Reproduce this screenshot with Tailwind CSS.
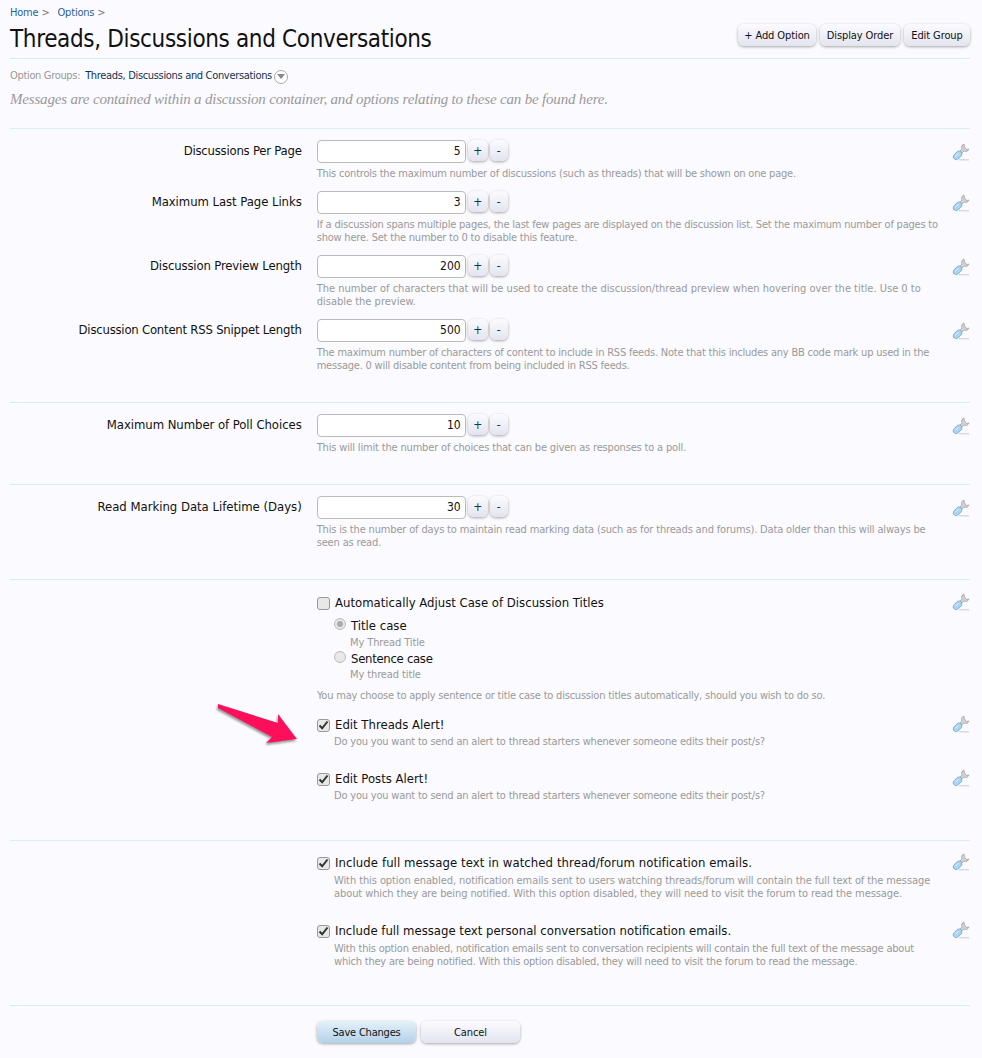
<!DOCTYPE html>
<html lang="en">
<head>
<meta charset="UTF-8" />
<title>Threads, Discussions and Conversations</title>
<script src="https://cdn.jsdelivr.net/npm/@tailwindcss/browser@4"></script>
</head>
<body class="relative h-[1058px] overflow-hidden bg-[#fbfbff] font-['DejaVu_Sans_Condensed','DejaVu_Sans',sans-serif] text-[#111]">

<!-- Header -->
<div class="ml-[10px] mr-[12px]">
  <div class="flex h-[24px] items-center pt-[3px] text-[11px] tracking-[-0.2px] text-[#777]">
    <a class="text-[#2b5f96]">Home</a><span class="ml-[3px] mr-[8px]">&gt;</span>
    <a class="text-[#2b5f96]">Options</a><span class="ml-[3px]">&gt;</span>
  </div>
  <div class="flex h-[35px] items-start justify-between border-b border-[#d7edfc]">
    <h1 class="text-[24px] leading-[31px] tracking-[-0.35px]">Threads, Discussions and Conversations</h1>
    <div class="flex gap-[4px]">
      <a class="flex h-[22px] w-[78px] items-center justify-center rounded-[6px] bg-gradient-to-b from-[#fbfbff] to-[#e4e4ef] pt-[2px] text-[11px] tracking-[-0.1px] shadow-[0_1px_3px_rgba(0,0,0,0.35)]">+ Add Option</a>
      <a class="flex h-[22px] w-[80px] items-center justify-center rounded-[6px] bg-gradient-to-b from-[#fbfbff] to-[#e4e4ef] pt-[2px] text-[11px] tracking-[-0.1px] shadow-[0_1px_3px_rgba(0,0,0,0.35)]">Display Order</a>
      <a class="flex h-[22px] w-[66px] items-center justify-center rounded-[6px] bg-gradient-to-b from-[#fbfbff] to-[#e4e4ef] pt-[2px] text-[11px] tracking-[-0.1px] shadow-[0_1px_3px_rgba(0,0,0,0.35)]">Edit Group</a>
    </div>
  </div>
  <div class="flex h-[33px] items-center pt-[2px] text-[11px] tracking-[-0.33px] text-[#999]">
    Option Groups:<span class="ml-[5px] text-[#12324f]">Threads, Discussions and Conversations</span>
    <span class="ml-[2px] flex h-[14px] w-[14px] items-center justify-center rounded-full border border-[#aaa] bg-white">
      <svg width="8" height="5" viewBox="0 0 8 5"><path d="M0 0h8L4 5z" fill="#888"/></svg>
    </span>
  </div>
  <p class="-mt-[1px] font-['Liberation_Serif',serif] text-[15px] leading-[16px] tracking-[-0.18px] italic text-[#999]">Messages are contained within a discussion container, and options relating to these can be found here.</p>
</div>

<!-- Number options -->
<div class="ml-[10px] mr-[12px] mt-[21px] border-t border-[#d7edfc] pt-[11px] pb-[30px]">
  <div class="flex h-[51px] items-start">
    <label class="w-[292px] pt-[2px] text-right text-[13px] leading-[18px] tracking-[-0.23px]">Discussions Per Page</label>
    <div class="ml-[15px] w-[625px]">
      <div class="flex h-[23px] items-start">
        <input value="5" readonly class="h-[23px] w-[149px] rounded-[4px] border border-[#bbb] bg-white px-[4px] pb-[1px] text-right text-[12px]" />
        <button class="ml-[2px] h-[21px] w-[20px] rounded-[6px] bg-gradient-to-b from-[#fbfbff] to-[#e4e4ef] text-[12px] text-[#12324f] shadow-[0_1px_3px_rgba(0,0,0,0.35)]">+</button>
        <button class="ml-[2px] h-[21px] w-[18px] rounded-[6px] bg-gradient-to-b from-[#fbfbff] to-[#e4e4ef] text-[12px] text-[#12324f] shadow-[0_1px_3px_rgba(0,0,0,0.35)]">-</button>
      </div>
      <p class="mt-[4px] text-[11px] leading-[13px] tracking-[-0.21px] text-[#999]">This controls the maximum number of discussions (such as threads) that will be shown on one page.</p>
    </div>
    <svg class="ml-[11px] mt-[3px]" width="18" height="20" viewBox="0 0 18 20"><use href="#wrench"/></svg>
  </div>
  <div class="flex h-[64px] items-start">
    <label class="w-[292px] pt-[2px] text-right text-[13px] leading-[18px] tracking-[-0.06px]">Maximum Last Page Links</label>
    <div class="ml-[15px] w-[625px]">
      <div class="flex h-[23px] items-start">
        <input value="3" readonly class="h-[23px] w-[149px] rounded-[4px] border border-[#bbb] bg-white px-[4px] pb-[1px] text-right text-[12px]" />
        <button class="ml-[2px] h-[21px] w-[20px] rounded-[6px] bg-gradient-to-b from-[#fbfbff] to-[#e4e4ef] text-[12px] text-[#12324f] shadow-[0_1px_3px_rgba(0,0,0,0.35)]">+</button>
        <button class="ml-[2px] h-[21px] w-[18px] rounded-[6px] bg-gradient-to-b from-[#fbfbff] to-[#e4e4ef] text-[12px] text-[#12324f] shadow-[0_1px_3px_rgba(0,0,0,0.35)]">-</button>
      </div>
      <p class="mt-[4px] text-[11px] leading-[13px] tracking-[-0.21px] text-[#999]">If a discussion spans multiple pages, the last few pages are displayed on the discussion list. Set the maximum number of pages to show here. Set the number to 0 to disable this feature.</p>
    </div>
    <svg class="ml-[11px] mt-[3px]" width="18" height="20" viewBox="0 0 18 20"><use href="#wrench"/></svg>
  </div>
  <div class="flex h-[64px] items-start">
    <label class="w-[292px] pt-[2px] text-right text-[13px] leading-[18px] tracking-[-0.15px]">Discussion Preview Length</label>
    <div class="ml-[15px] w-[625px]">
      <div class="flex h-[23px] items-start">
        <input value="200" readonly class="h-[23px] w-[149px] rounded-[4px] border border-[#bbb] bg-white px-[4px] pb-[1px] text-right text-[12px]" />
        <button class="ml-[2px] h-[21px] w-[20px] rounded-[6px] bg-gradient-to-b from-[#fbfbff] to-[#e4e4ef] text-[12px] text-[#12324f] shadow-[0_1px_3px_rgba(0,0,0,0.35)]">+</button>
        <button class="ml-[2px] h-[21px] w-[18px] rounded-[6px] bg-gradient-to-b from-[#fbfbff] to-[#e4e4ef] text-[12px] text-[#12324f] shadow-[0_1px_3px_rgba(0,0,0,0.35)]">-</button>
      </div>
      <p class="mt-[4px] text-[11px] leading-[13px] tracking-[0px] text-[#999]">The number of characters that will be used to create the discussion/thread preview when hovering over the title. Use 0 to disable the preview.</p>
    </div>
    <svg class="ml-[11px] mt-[3px]" width="18" height="20" viewBox="0 0 18 20"><use href="#wrench"/></svg>
  </div>
  <div class="flex h-[53px] items-start">
    <label class="w-[292px] pt-[2px] text-right text-[13px] leading-[18px] tracking-[-0.23px]">Discussion Content RSS Snippet Length</label>
    <div class="ml-[15px] w-[625px]">
      <div class="flex h-[23px] items-start">
        <input value="500" readonly class="h-[23px] w-[149px] rounded-[4px] border border-[#bbb] bg-white px-[4px] pb-[1px] text-right text-[12px]" />
        <button class="ml-[2px] h-[21px] w-[20px] rounded-[6px] bg-gradient-to-b from-[#fbfbff] to-[#e4e4ef] text-[12px] text-[#12324f] shadow-[0_1px_3px_rgba(0,0,0,0.35)]">+</button>
        <button class="ml-[2px] h-[21px] w-[18px] rounded-[6px] bg-gradient-to-b from-[#fbfbff] to-[#e4e4ef] text-[12px] text-[#12324f] shadow-[0_1px_3px_rgba(0,0,0,0.35)]">-</button>
      </div>
      <p class="mt-[4px] text-[11px] leading-[13px] tracking-[-0.21px] text-[#999]">The maximum number of characters of content to include in RSS feeds. Note that this includes any BB code mark up used in the message. 0 will disable content from being included in RSS feeds.</p>
    </div>
    <svg class="ml-[11px] mt-[3px]" width="18" height="20" viewBox="0 0 18 20"><use href="#wrench"/></svg>
  </div>
</div>

<div class="ml-[10px] mr-[12px] border-t border-[#d7edfc] pt-[11px] pb-[30px]">
  <div class="flex h-[40px] items-start">
    <label class="w-[292px] pt-[2px] text-right text-[13px] leading-[18px] tracking-[-0.06px]">Maximum Number of Poll Choices</label>
    <div class="ml-[15px] w-[625px]">
      <div class="flex h-[23px] items-start">
        <input value="10" readonly class="h-[23px] w-[149px] rounded-[4px] border border-[#bbb] bg-white px-[4px] pb-[1px] text-right text-[12px]" />
        <button class="ml-[2px] h-[21px] w-[20px] rounded-[6px] bg-gradient-to-b from-[#fbfbff] to-[#e4e4ef] text-[12px] text-[#12324f] shadow-[0_1px_3px_rgba(0,0,0,0.35)]">+</button>
        <button class="ml-[2px] h-[21px] w-[18px] rounded-[6px] bg-gradient-to-b from-[#fbfbff] to-[#e4e4ef] text-[12px] text-[#12324f] shadow-[0_1px_3px_rgba(0,0,0,0.35)]">-</button>
      </div>
      <p class="mt-[4px] text-[11px] leading-[13px] tracking-[-0.17px] text-[#999]">This will limit the number of choices that can be given as responses to a poll.</p>
    </div>
    <svg class="ml-[11px] mt-[3px]" width="18" height="20" viewBox="0 0 18 20"><use href="#wrench"/></svg>
  </div>
</div>

<div class="ml-[10px] mr-[12px] border-t border-[#d7edfc] pt-[11px] pb-[30px]">
  <div class="flex h-[53px] items-start">
    <label class="w-[292px] pt-[2px] text-right text-[13px] leading-[18px] tracking-[-0.02px]">Read Marking Data Lifetime (Days)</label>
    <div class="ml-[15px] w-[625px]">
      <div class="flex h-[23px] items-start">
        <input value="30" readonly class="h-[23px] w-[149px] rounded-[4px] border border-[#bbb] bg-white px-[4px] pb-[1px] text-right text-[12px]" />
        <button class="ml-[2px] h-[21px] w-[20px] rounded-[6px] bg-gradient-to-b from-[#fbfbff] to-[#e4e4ef] text-[12px] text-[#12324f] shadow-[0_1px_3px_rgba(0,0,0,0.35)]">+</button>
        <button class="ml-[2px] h-[21px] w-[18px] rounded-[6px] bg-gradient-to-b from-[#fbfbff] to-[#e4e4ef] text-[12px] text-[#12324f] shadow-[0_1px_3px_rgba(0,0,0,0.35)]">-</button>
      </div>
      <p class="mt-[4px] text-[11px] leading-[13px] tracking-[-0.16px] text-[#999]">This is the number of days to maintain read marking data (such as for threads and forums). Data older than this will always be seen as read.</p>
    </div>
    <svg class="ml-[11px] mt-[3px]" width="18" height="20" viewBox="0 0 18 20"><use href="#wrench"/></svg>
  </div>
</div>

<!-- Checkbox options -->
<div class="ml-[10px] mr-[12px] h-[261px] border-t border-[#d7edfc] pt-[13px]">
  <div class="ml-[307px] flex h-[122px] items-start">
    <div class="w-[625px]">
      <div class="flex h-[20px] items-center">
        <span class="h-[13px] w-[13px] rounded-[3px] border border-[#999] bg-[#e8e8e8]"></span>
        <span class="ml-[5px] text-[13px]">Automatically Adjust Case of Discussion Titles</span>
      </div>
      <div class="mt-[4px] ml-[17px]">
        <div class="flex h-[17px] items-center">
          <span class="mb-[3px] flex h-[12px] w-[12px] items-center justify-center rounded-full border border-[#bbb] bg-[#e8e8e8]"><span class="h-[6px] w-[6px] rounded-full bg-[#aaa]"></span></span>
          <span class="ml-[5px] text-[13px]">Title case</span>
        </div>
        <p class="ml-[16px] mt-[1px] text-[11px] leading-[15px] tracking-[-0.11px] text-[#999]">My Thread Title</p>
        <div class="flex h-[17px] items-center">
          <span class="mb-[3px] h-[12px] w-[12px] rounded-full border border-[#bbb] bg-[#e8e8e8]"></span>
          <span class="ml-[5px] text-[13px] tracking-[-0.3px]">Sentence case</span>
        </div>
        <p class="ml-[16px] text-[11px] leading-[15px] tracking-[-0.11px] text-[#999]">My thread title</p>
      </div>
      <p class="mt-[7px] text-[11px] leading-[13px] tracking-[-0.21px] text-[#999]">You may choose to apply sentence or title case to discussion titles automatically, should you wish to do so.</p>
    </div>
    <svg class="ml-[11px]" width="18" height="20" viewBox="0 0 18 20"><use href="#wrench"/></svg>
  </div>
  <div class="ml-[307px] flex h-[54px] items-start">
    <div class="w-[625px]">
      <div class="flex h-[20px] items-center">
        <span class="flex h-[13px] w-[13px] items-center justify-center rounded-[3px] border border-[#999] bg-[#e8e8e8]"><svg width="11" height="10" viewBox="0 0 11 10"><path d="M1.5 5.5 4.2 8.3 9.5 1.5" fill="none" stroke="#333" stroke-width="2"/></svg></span>
        <span class="ml-[5px] text-[13px]">Edit Threads Alert!</span>
      </div>
      <p class="ml-[17px] text-[11px] leading-[13px] tracking-[-0.19px] text-[#999]">Do you you want to send an alert to thread starters whenever someone edits their post/s?</p>
    </div>
    <svg class="ml-[11px]" width="18" height="20" viewBox="0 0 18 20"><use href="#wrench"/></svg>
  </div>
  <div class="ml-[307px] flex items-start">
    <div class="w-[625px]">
      <div class="flex h-[20px] items-center">
        <span class="flex h-[13px] w-[13px] items-center justify-center rounded-[3px] border border-[#999] bg-[#e8e8e8]"><svg width="11" height="10" viewBox="0 0 11 10"><path d="M1.5 5.5 4.2 8.3 9.5 1.5" fill="none" stroke="#333" stroke-width="2"/></svg></span>
        <span class="ml-[5px] text-[13px]">Edit Posts Alert!</span>
      </div>
      <p class="ml-[17px] text-[11px] leading-[13px] tracking-[-0.19px] text-[#999]">Do you you want to send an alert to thread starters whenever someone edits their post/s?</p>
    </div>
    <svg class="ml-[11px]" width="18" height="20" viewBox="0 0 18 20"><use href="#wrench"/></svg>
  </div>
</div>

<div class="ml-[10px] mr-[12px] h-[165px] border-t border-[#d7edfc] pt-[12px]">
  <div class="ml-[307px] flex h-[68px] items-start">
    <div class="w-[625px]">
      <div class="flex h-[20px] items-center">
        <span class="flex h-[13px] w-[13px] items-center justify-center rounded-[3px] border border-[#999] bg-[#e8e8e8]"><svg width="11" height="10" viewBox="0 0 11 10"><path d="M1.5 5.5 4.2 8.3 9.5 1.5" fill="none" stroke="#333" stroke-width="2"/></svg></span>
        <span class="ml-[5px] text-[13px] tracking-[0.08px]">Include full message text in watched thread/forum notification emails.</span>
      </div>
      <p class="ml-[17px] mt-[1px] text-[11px] leading-[13px] tracking-[-0.09px] text-[#999]">With this option enabled, notification emails sent to users watching threads/forum will contain the full text of the message about which they are being notified. With this option disabled, they will need to visit the forum to read the message.</p>
    </div>
    <svg class="ml-[11px]" width="18" height="20" viewBox="0 0 18 20"><use href="#wrench"/></svg>
  </div>
  <div class="ml-[307px] flex items-start">
    <div class="w-[625px]">
      <div class="flex h-[20px] items-center">
        <span class="flex h-[13px] w-[13px] items-center justify-center rounded-[3px] border border-[#999] bg-[#e8e8e8]"><svg width="11" height="10" viewBox="0 0 11 10"><path d="M1.5 5.5 4.2 8.3 9.5 1.5" fill="none" stroke="#333" stroke-width="2"/></svg></span>
        <span class="ml-[5px] text-[13px]">Include full message text personal conversation notification emails.</span>
      </div>
      <p class="ml-[17px] mt-[1px] text-[11px] leading-[13px] tracking-[-0.21px] text-[#999]">With this option enabled, notification emails sent to conversation recipients will contain the full text of the message about which they are being notified. With this option disabled, they will need to visit the forum to read the message.</p>
    </div>
    <svg class="ml-[11px]" width="18" height="20" viewBox="0 0 18 20"><use href="#wrench"/></svg>
  </div>
</div>

<!-- Submit -->
<div class="ml-[10px] mr-[12px] flex gap-[5px] border-t border-[#d7edfc] pt-[15px] pl-[307px]">
  <button class="h-[22px] w-[99px] rounded-[6px] bg-gradient-to-b from-[#e4f1fa] to-[#b3d1e8] pt-[2px] text-[11px] tracking-[-0.2px] shadow-[0_1px_3px_rgba(0,0,0,0.35)]">Save Changes</button>
  <button class="h-[22px] w-[99px] rounded-[6px] bg-gradient-to-b from-[#fbfbff] to-[#e4e4ef] pt-[2px] text-[11px] tracking-[-0.1px] shadow-[0_1px_3px_rgba(0,0,0,0.35)]">Cancel</button>
</div>

<!-- Wrench icon, reused by each option -->
<svg width="0" height="0" class="absolute">
  <defs>
    <g id="wrench">
      <path d="M7 16.8h10" stroke="#aaa" stroke-width="1.2" opacity="0.5"/>
      <path d="M12 1A3.8 3.8 0 0 0 10 6L7.5 8.5 9.5 10.5 12 8A3.8 3.8 0 0 0 17 6L14.5 6.5 12.5 4z" fill="#d2d2d2" stroke="#999" stroke-width="0.7"/>
      <path d="M4.2 13.8 7 11" stroke="#7ba9cf" stroke-width="6.4" stroke-linecap="round"/>
      <path d="M4.2 13.8 7 11" stroke="#abd6f2" stroke-width="5" stroke-linecap="round"/>
      <path d="M3.6 13 6 10.6" stroke="#e2f2fc" stroke-width="1" stroke-linecap="round"/>
    </g>
  </defs>
</svg>

<!-- Annotation arrow -->
<svg class="absolute left-[210px] top-[695px] drop-shadow-[-1px_2px_1px_rgba(0,0,0,0.4)]" width="100" height="60" viewBox="210 695 100 60">
  <path d="M218 704 278 723 278 714 297 739 266 743 272 737 218 708z" fill="#fe0f5c"/>
</svg>

</body>
</html>
